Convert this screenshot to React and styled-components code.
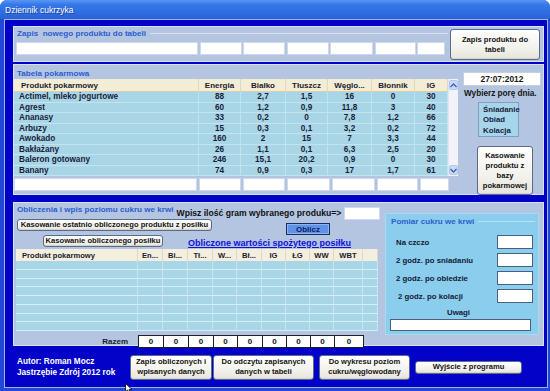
import React from "react";
import styled, { createGlobalStyle } from "styled-components";

const FOODS = [
  ["Actimel, mleko jogurtowe", "88", "2,7", "1,5", "16", "0", "30"],
  ["Agrest", "60", "1,2", "0,9", "11,8", "3", "40"],
  ["Ananasy", "33", "0,2", "0", "7,8", "1,2", "66"],
  ["Arbuzy", "15", "0,3", "0,1", "3,2", "0,2", "72"],
  ["Awokado", "160", "2", "15", "7", "3,3", "44"],
  ["Bakłażany", "26", "1,1", "0,1", "6,3", "2,5", "20"],
  ["Baleron gotowany", "246", "15,1", "20,2", "0,9", "0", "30"],
  ["Banany", "74", "0,9", "0,3", "17", "1,7", "61"],
];
const FOOD_HEAD = ["Produkt pokarmowy", "Energia", "Białko", "Tłuszcz", "Węglo...", "Błonnik", "IG"];
const MEAL_HEAD = ["Produkt pokarmowy", "En...", "Bi...", "Tł...", "W...", "Bł...", "IG", "ŁG", "WW", "WBT", ""];
const SUGAR = ["Na czczo", "2 godz. po sniadaniu", "2 godz. po obiedzie", "2 godz. po kolacji"];

export default function App() {
  return (
    <>
      <GlobalStyle />
      <Window>
        <TitleBar>Dziennik cukrzyka</TitleBar>
        <Frame>
          <Client>
            <Panel $h={36}>
              <EntryRow>
                <EntryLeft>
                  <Legend>Zapis&nbsp; nowego produktu do tabeli</Legend>
                  <InputRow>
                    {Array.from({ length: 7 }).map((_, i) => <Field key={i} />)}
                  </InputRow>
                </EntryLeft>
                <Button $w={90} $h={31} $mt={2}>Zapis produktu do<br />tabeli</Button>
              </EntryRow>
            </Panel>

            <Panel $h={131} $mt={2}>
              <FoodRow>
                <FoodLeft>
                  <Legend $plain>Tabela pokarmowa</Legend>
                  <TableWrap>
                    <FoodGrid>
                      {FOOD_HEAD.map((h, i) => (
                        <HeadCell key={h} $left={i === 0}>{h}</HeadCell>
                      ))}
                      {FOODS.map((row) =>
                        row.map((v, i) => (
                          <FoodCell key={row[0] + i} $left={i === 0}>{v}</FoodCell>
                        ))
                      )}
                    </FoodGrid>
                    <ScrollBar>
                      <ScrollBtn>
                        <svg width="7" height="5" viewBox="0 0 7 5"><path d="M0.5 4 L3.5 1 L6.5 4" fill="none" stroke="#3b62c0" strokeWidth="1.4" /></svg>
                      </ScrollBtn>
                      <ScrollTrack />
                      <ScrollBtn>
                        <svg width="7" height="5" viewBox="0 0 7 5"><path d="M0.5 1 L3.5 4 L6.5 1" fill="none" stroke="#3b62c0" strokeWidth="1.4" /></svg>
                      </ScrollBtn>
                    </ScrollBar>
                  </TableWrap>
                  <InputRow $second>
                    {Array.from({ length: 7 }).map((_, i) => <Field key={i} />)}
                  </InputRow>
                </FoodLeft>
                <SideColumn>
                  <DateBox>27:07:2012</DateBox>
                  <SideLabel>Wybierz porę dnia.</SideLabel>
                  <ListBox>
                    <span>Śniadanie</span>
                    <span>Obiad</span>
                    <span>Kolacja</span>
                  </ListBox>
                  <Button $w={56} $h={49} $mt={9} $ml={14}>
                    Kasowanie<br />produktu z<br />bazy<br />pokarmowej
                  </Button>
                </SideColumn>
              </FoodRow>
            </Panel>

            <Panel $h={144} $mt={7}>
              <CalcRow>
                <CalcLeft>
                  <TopLine>
                    <Legend $plain $inline>Obliczenia i wpis poziomu cukru we krwi</Legend>
                    <Prompt>Wpisz ilość gram wybranego produku=&gt;</Prompt>
                    <Field $w={36} $h={13} />
                  </TopLine>
                  <ButtonLine>
                    <Button $w={195} $h={12} $ml={3}>Kasowanie ostatnio obliczonego produktu z posiłku</Button>
                    <CalcButton>Oblicz</CalcButton>
                  </ButtonLine>
                  <ButtonLine $tall>
                    <Button $w={120} $h={12} $ml={29}>Kasowanie obliczonego posiłku</Button>
                    <Link href="#">Obliczone wartości spożytego posiłku</Link>
                  </ButtonLine>
                  <MealGrid>
                    {MEAL_HEAD.map((h, i) => (
                      <MealHead key={i} $left={i === 0}>{h}</MealHead>
                    ))}
                    {Array.from({ length: 8 * 11 }).map((_, i) => <MealCell key={i} />)}
                  </MealGrid>
                  <SumRow>
                    <SumLabel>Razem</SumLabel>
                    {Array.from({ length: 9 }).map((_, i) => <SumBox key={i}>0</SumBox>)}
                  </SumRow>
                </CalcLeft>
                <SugarBox>
                  <Legend $sky>Pomiar cukru we krwi</Legend>
                  <SugarGrid>
                    {SUGAR.map((s, i) => (
                      <React.Fragment key={s}>
                        <SugarLabel $shift={i === 3}>{s}</SugarLabel>
                        <Field $w={36} $h={14} $dark />
                      </React.Fragment>
                    ))}
                  </SugarGrid>
                  <NotesLabel>Uwagi</NotesLabel>
                  <Field $w={141} $h={12} $dark $ml={2} />
                </SugarBox>
              </CalcRow>
            </Panel>

            <Footer>
              <Author>
                Autor: Roman Mocz<br />Jastrzębie Zdrój 2012 rok
              </Author>
              <Button $w={82} $h={25}>Zapis obliczonych i<br />wpisanych danych</Button>
              <Button $w={101} $h={25} $ml={1}>Do odczytu zapisanych<br />danych w tabeli</Button>
              <Button $w={91} $h={25} $ml={5}>Do wykresu poziom<br />cukru/węglowodany</Button>
              <Button $w={107} $h={13} $ml={5}>Wyjście z programu</Button>
            </Footer>
          </Client>
        </Frame>
        <Cursor width="8" height="10" viewBox="0 0 8 10">
          <path d="M0.5 0.5 L0.5 9 L2.6 7 L4 9.8 L5.4 9.2 L4 6.4 L7 6.4 Z" fill="#ffffff" stroke="#000000" strokeWidth="0.8" />
        </Cursor>
      </Window>
    </>
  );
}

/* STYLES */
const GlobalStyle = createGlobalStyle`
  html, body { margin: 0; padding: 0; background: #ffffff; }
  body { font-family: "Liberation Sans", Arial, sans-serif; }
  * { box-sizing: border-box; }
`;

const Window = styled.div`
  position: relative;
  width: 550px;
  height: 391px;
  display: flex;
  flex-direction: column;
  border-radius: 7px 7px 0 0;
  overflow: hidden;
  background: #2148d6;
`;

const Cursor = styled.svg`
  position: absolute;
  left: 125px;
  top: 383px;
`;

const TitleBar = styled.div`
  height: 19px;
  flex: none;
  display: flex;
  align-items: center;
  padding-left: 5px;
  color: #ffffff;
  font-size: 8.5px;
  text-shadow: 1px 1px 0 #1a3f9a;
  background: linear-gradient(#5a96f4 0%, #3477e8 25%, #2e6ce0 70%, #2a60d2 100%);
`;

const Frame = styled.div`
  flex: 1;
  display: flex;
  padding: 0 4px 3px 4px;
  background: #2148d6;
`;

const Client = styled.div`
  flex: 1;
  display: flex;
  flex-direction: column;
  padding: 6px 3px 0 8px;
  background: #0202c8;
  border: 1px solid #9fb3f0;
`;

const Panel = styled.section`
  height: ${(p) => p.$h}px;
  margin-top: ${(p) => p.$mt || 0}px;
  flex: none;
  background: #b3c5e1;
  border: 1px solid #d8e2f3;
  font-weight: bold;
  font-size: 8px;
  color: #1a1d3c;
`;

const Legend = styled.div`
  display: ${(p) => (p.$inline ? "inline-flex" : "flex")};
  align-items: center;
  gap: ${(p) => (p.$plain ? 0 : 4)}px;
  height: ${(p) => (p.$sky ? 12 : 11)}px;
  padding-left: 3px;
  color: #2c5dd0;
  font-size: 8.1px;
  font-weight: bold;
  white-space: nowrap;
  &::after {
    content: "";
    flex: 1;
    height: 1px;
    background: ${(p) => (p.$plain ? "transparent" : p.$sky ? "#b8e2f4" : "#d8e2f2")};
  }
`;

const EntryRow = styled.div`
  display: flex;
  padding: 0 3px 0 2px;
`;

const EntryLeft = styled.div`
  width: 432px;
  margin-right: 2px;
  padding-top: 1px;
  & > div:first-child {
    padding-left: 1px;
  }
`;

const InputRow = styled.div`
  display: grid;
  grid-template-columns: ${(p) =>
    p.$second ? "183px 42px 42px 43px 43px 41px 29px" : "182px 42px 42px 42px 43px 41px 28px"};
  column-gap: ${(p) => (p.$second ? 2 : 1.5)}px;
  margin-top: ${(p) => (p.$second ? 2 : 3)}px;
  height: 13px;
`;

const Field = styled.div`
  background: #ffffff;
  border: 1px solid ${(p) => (p.$dark ? "#4b5f84" : "#d2d9e6")};
  width: ${(p) => (p.$w ? `${p.$w}px` : "auto")};
  height: ${(p) => (p.$h ? `${p.$h}px` : "auto")};
  margin-left: ${(p) => p.$ml || 0}px;
  flex: none;
`;

const Button = styled.div`
  width: ${(p) => p.$w}px;
  height: ${(p) => p.$h}px;
  margin-top: ${(p) => p.$mt || 0}px;
  margin-left: ${(p) => p.$ml || 0}px;
  flex: none;
  display: flex;
  align-items: center;
  justify-content: center;
  text-align: center;
  font-size: 7.6px;
  font-weight: bold;
  line-height: 10px;
  color: #141414;
  white-space: nowrap;
  background: linear-gradient(#ffffff, #f3f2ec 60%, #e6e4dc);
  border: 1px solid #5a6b8e;
  border-radius: 3px;
  box-shadow: inset 0 -1px 0 #d6d3c8;
`;

const FoodRow = styled.div`
  display: flex;
`;

const FoodLeft = styled.div`
  width: 444px;
  padding-top: 3px;
`;

const TableWrap = styled.div`
  display: flex;
  height: 97px;
`;

const FoodGrid = styled.div`
  display: grid;
  grid-template-columns: 185px 42px 45px 42px 44px 43px 33px;
  grid-template-rows: 13px repeat(8, 10.5px);
  background: #a9d6e6;
`;

const HeadCell = styled.div`
  display: flex;
  align-items: center;
  justify-content: ${(p) => (p.$left ? "flex-start" : "center")};
  padding-left: ${(p) => (p.$left ? 7 : 0)}px;
  background: #f4edd5;
  border-right: 1px solid #e2d8bb;
  border-bottom: 1px solid #d9cfae;
  font-size: 8px;
  color: #1c1c30;
  white-space: nowrap;
`;

const FoodCell = styled.div`
  display: flex;
  align-items: center;
  justify-content: ${(p) => (p.$left ? "flex-start" : "center")};
  padding-left: ${(p) => (p.$left ? 5 : 0)}px;
  border-right: 1px solid #bfe3ef;
  border-bottom: 1px solid #c3e4ef;
  font-size: 8.2px;
  color: #1a1d3c;
  white-space: nowrap;
  overflow: hidden;
`;

const ScrollBar = styled.div`
  width: 10px;
  display: flex;
  flex-direction: column;
  background: #f1f3f9;
  border-left: 1px solid #dfe5f2;
`;

const ScrollBtn = styled.div`
  height: 10px;
  display: flex;
  align-items: center;
  justify-content: center;
  margin: 1px 0;
  background: #c9daf6;
  border: 1px solid #b4c8ee;
  border-radius: 2px;
`;

const ScrollTrack = styled.div`
  flex: 1;
`;

const SideColumn = styled.div`
  width: 78px;
  margin-left: 5px;
  padding-top: 7px;
  display: flex;
  flex-direction: column;
`;

const DateBox = styled.div`
  height: 14px;
  display: flex;
  align-items: center;
  justify-content: center;
  background: #ffffff;
  border: 1px solid #c7cfdf;
  font-size: 8.4px;
  color: #1a1a1a;
`;

const SideLabel = styled.div`
  margin-top: 3px;
  height: 10px;
  white-space: nowrap;
  font-size: 8.2px;
  color: #151515;
  margin-left: 1px;
`;

const ListBox = styled.div`
  width: 41px;
  height: 35px;
  margin: 3px 0 0 15px;
  padding: 2px 0 0 4px;
  display: flex;
  flex-direction: column;
  background: #a7d6ea;
  border: 1px solid #7f9ec9;
  font-size: 7.8px;
  line-height: 10.4px;
  color: #1a1d3c;
`;

const CalcRow = styled.div`
  display: flex;
`;

const CalcLeft = styled.div`
  width: 366px;
  display: flex;
  flex-direction: column;
`;

const TopLine = styled.div`
  height: 16px;
  display: flex;
  align-items: flex-end;
  & > div:first-child {
    align-self: flex-start;
    margin-top: 1px;
  }
  & > div:last-child {
    margin-left: 3px;
    margin-bottom: -1px;
  }
`;

const Prompt = styled.div`
  margin-left: 3px;
  margin-bottom: 1px;
  font-size: 8.6px;
  color: #111111;
  white-space: nowrap;
`;

const ButtonLine = styled.div`
  display: flex;
  align-items: ${(p) => (p.$tall ? "center" : "flex-start")};
  height: ${(p) => (p.$tall ? 14 : 15)}px;
`;

const CalcButton = styled.div`
  width: 44px;
  height: 12px;
  margin: 4px 0 0 74px;
  display: flex;
  align-items: center;
  justify-content: center;
  background: #5f93ea;
  border: 1px solid #1d2c5c;
  box-shadow: inset 0 0 0 1px #8eb3f2;
  font-size: 8px;
  color: #0d1d5e;
`;

const Link = styled.a`
  margin-left: 25px;
  margin-top: 3px;
  font-size: 9px;
  color: #1212d6;
  text-decoration: underline;
  white-space: nowrap;
`;

const MealGrid = styled.div`
  margin: 1px 0 0 2px;
  display: grid;
  grid-template-columns: 122px 25px 25px 25px 24px 25px 24px 24px 24px 29px 15px;
  grid-template-rows: 12px repeat(8, 8.75px);
  width: 362px;
  background: #a9d6e6;
`;

const MealHead = styled.div`
  display: flex;
  align-items: center;
  justify-content: ${(p) => (p.$left ? "flex-start" : "center")};
  padding-left: ${(p) => (p.$left ? 6 : 0)}px;
  background: #f3eedd;
  border-right: 1px solid #e0d8c0;
  font-size: 7.6px;
  color: #1c1c30;
  white-space: nowrap;
`;

const MealCell = styled.div`
  border-right: 1px solid #c5e6f0;
  border-bottom: 1px solid #d6eef6;
`;

const SumRow = styled.div`
  margin: 4px 0 0 2px;
  display: grid;
  grid-template-columns: 122px 25px 25px 25px 24px 25px 24px 24px 24px 29px;
  height: 13px;
`;

const SumLabel = styled.div`
  display: flex;
  align-items: center;
  justify-content: flex-end;
  padding-right: 10px;
  font-size: 8px;
  color: #1a1a2a;
`;

const SumBox = styled.div`
  display: flex;
  align-items: center;
  justify-content: center;
  background: #ffffff;
  border: 1px solid #202020;
  margin-right: -1px;
  font-size: 8px;
  color: #111111;
`;

const SugarBox = styled.div`
  width: 154px;
  height: 122px;
  margin: 10px 0 0 5px;
  padding: 1px 3px 0 2px;
  background: #8acdec;
  border: 1px solid #a9daf0;
  display: flex;
  flex-direction: column;
`;

const SugarGrid = styled.div`
  display: grid;
  grid-template-columns: 1fr 36px;
  grid-auto-rows: 14px;
  row-gap: 4px;
  margin-top: 8px;
  padding-right: 2px;
`;

const SugarLabel = styled.div`
  display: flex;
  align-items: center;
  padding-left: ${(p) => (p.$shift ? 10 : 8)}px;
  font-size: 7.8px;
  color: #141a36;
  white-space: nowrap;
`;

const NotesLabel = styled.div`
  margin-top: 5px;
  height: 11px;
  text-align: center;
  font-size: 7.8px;
  color: #141a36;
  padding-right: 6px;
`;

const Footer = styled.div`
  flex: 1;
  display: flex;
  align-items: center;
  padding: 1px 0 0 0;
`;

const Author = styled.div`
  width: 117px;
  padding-left: 4px;
  font-size: 8.2px;
  font-weight: bold;
  line-height: 11px;
  color: #ffffff;
  white-space: nowrap;
`;
